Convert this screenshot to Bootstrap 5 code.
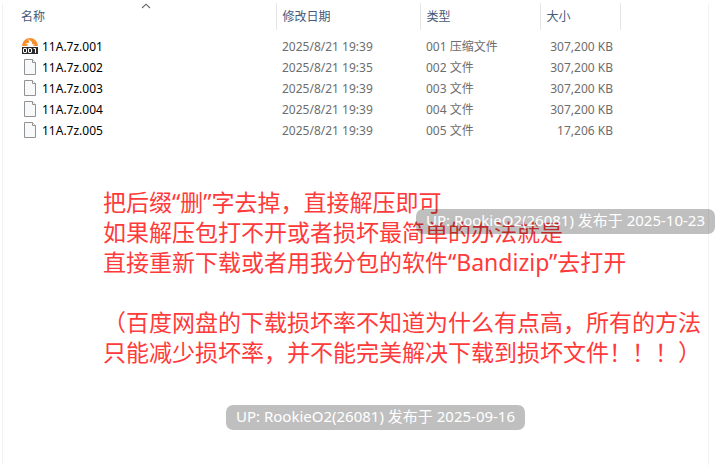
<!DOCTYPE html>
<html lang="zh-CN">
<head>
<meta charset="utf-8">
<meta name="viewport" content="width=device-width, initial-scale=1">
<title>11A.7z</title>
<link href="https://cdn.jsdelivr.net/npm/bootstrap@5.3.0/dist/css/bootstrap.min.css" rel="stylesheet">
<style>
body { font-family: "Noto Sans", "Noto Sans CJK SC", sans-serif; background: #fff; }
.explorer { margin: 3px 7px 0 2px; border-left: 1px solid #f3f3f3; border-right: 1px solid #f3f3f3; }
.files { table-layout: fixed; width: 100%; font-size: 12px; line-height: 21px; color: #6d6d6d; }
.files th { height: 27px; padding: 0 6px; font-weight: 400; color: #44597a; border-right: 1px solid #e5e5e5; position: relative; }
.files td { height: 21px; padding: 0 6px; white-space: nowrap; }
.files th:first-child, .files td:first-child { padding-left: 18px; }
.files tbody::before { content: ""; display: block; height: 6px; }
.files td.size { padding-right: 7px; text-align: right; }
.files .file-name { color: #000; }
.files svg { flex: none; }
.col-name { width: 273px; }
.col-date { width: 144px; }
.col-type { width: 120px; }
.col-size { width: 80px; }
.sort-mark { left: 138px; top: 0; }
.notice { margin: 46px 0 0 100px; font-size: 23px; line-height: 30px; color: #ff3a3a; }
.notice p { margin: 0 0 30px; white-space: nowrap; }
.stamp { padding: 0 10px 3px; border-radius: 7px; background: rgba(0,0,0,.25); color: #fff; font-size: 15px; line-height: 22px; white-space: nowrap; }
.stamp-over { right: 1px; top: 209px; }
.stamp-row { margin-top: 38px; padding-left: 40px; }
</style>
<script src="https://cdn.jsdelivr.net/npm/bootstrap@5.3.0/dist/js/bootstrap.bundle.min.js"></script>
</head>
<body class="position-relative min-vh-100 overflow-hidden d-flex flex-column">
<main class="explorer flex-grow-1">
  <table class="files">
    <colgroup><col class="col-name"><col class="col-date"><col class="col-type"><col class="col-size"><col></colgroup>
    <thead>
      <tr>
        <th scope="col">名称
          <svg class="sort-mark position-absolute" width="10" height="6" viewBox="0 0 10 6" fill="none" stroke="#666" stroke-width="1.1" aria-hidden="true"><path d="M1 5 5 1.2 9 5"/></svg>
        </th>
        <th scope="col">修改日期</th><th scope="col">类型</th><th scope="col">大小</th><td></td>
      </tr>
    </thead>
    <tbody>
      <tr>
        <td><div class="file-name d-flex align-items-center gap-1">
          <svg width="17" height="17" viewBox="0 0 17 17" aria-hidden="true"><path d="M1 8C1.600 3 4.700 0 9 0s7.400 3 8 8z" fill="#f7902b"/><path d="M7.200 1 11 4v2l3 .8L11.500 8H5.800l1.500-1.400-3.300-.5L8.300 4.600z" fill="#fff"/><path d="M1 9h16v7H1z" fill="#2b2b2b"/><g fill="none" stroke="#fff"><rect x="2.500" y="10.500" width="3" height="4" rx=".4"/><rect x="7.500" y="10.500" width="3" height="4" rx=".4"/><path d="M12.500 10.500h2V15"/></g></svg>
          <span>11A.7z.001</span></div></td>
        <td>2025/8/21 19:39</td><td>001 压缩文件</td><td class="size">307,200 KB</td><td></td>
      </tr>
      <tr>
        <td><div class="file-name d-flex align-items-center gap-1"><svg width="17" height="17" viewBox="0 0 17 17" aria-hidden="true"><use href="#page"/></svg><span>11A.7z.002</span></div></td>
        <td>2025/8/21 19:35</td><td>002 文件</td><td class="size">307,200 KB</td><td></td>
      </tr>
      <tr>
        <td><div class="file-name d-flex align-items-center gap-1"><svg width="17" height="17" viewBox="0 0 17 17" aria-hidden="true"><use href="#page"/></svg><span>11A.7z.003</span></div></td>
        <td>2025/8/21 19:39</td><td>003 文件</td><td class="size">307,200 KB</td><td></td>
      </tr>
      <tr>
        <td><div class="file-name d-flex align-items-center gap-1"><svg width="17" height="17" viewBox="0 0 17 17" aria-hidden="true"><use href="#page"/></svg><span>11A.7z.004</span></div></td>
        <td>2025/8/21 19:39</td><td>004 文件</td><td class="size">307,200 KB</td><td></td>
      </tr>
      <tr>
        <td><div class="file-name d-flex align-items-center gap-1"><svg width="17" height="17" viewBox="0 0 17 17" aria-hidden="true"><use href="#page"/></svg><span>11A.7z.005</span></div></td>
        <td>2025/8/21 19:39</td><td>005 文件</td><td class="size">17,206 KB</td><td></td>
      </tr>
    </tbody>
  </table>

  <div class="notice">
    <p>把后缀“删”字去掉，直接解压即可<br>如果解压包打不开或者损坏最简单的办法就是<br>直接重新下载或者用我分包的软件“Bandizip”去打开</p>
    <p>（百度网盘的下载损坏率不知道为什么有点高，所有的方法<br>只能减少损坏率，并不能完美解决下载到损坏文件！！！）</p>
  </div>

  <div class="stamp-row d-flex justify-content-center"><div class="stamp">UP: RookieO2(26081) 发布于 2025-09-16</div></div>
</main>
<div class="stamp stamp-over position-absolute">UP: RookieO2(26081) 发布于 2025-10-23</div>

<svg width="0" height="0" class="position-absolute" aria-hidden="true">
  <defs><g id="page"><path d="M3.500.5h8l3 3v12h-11z" fill="#f8f9fa" stroke="#929292"/><path d="M11.500.5v3h3" fill="#fff" stroke="#929292"/></g></defs>
</svg>
</body>
</html>
